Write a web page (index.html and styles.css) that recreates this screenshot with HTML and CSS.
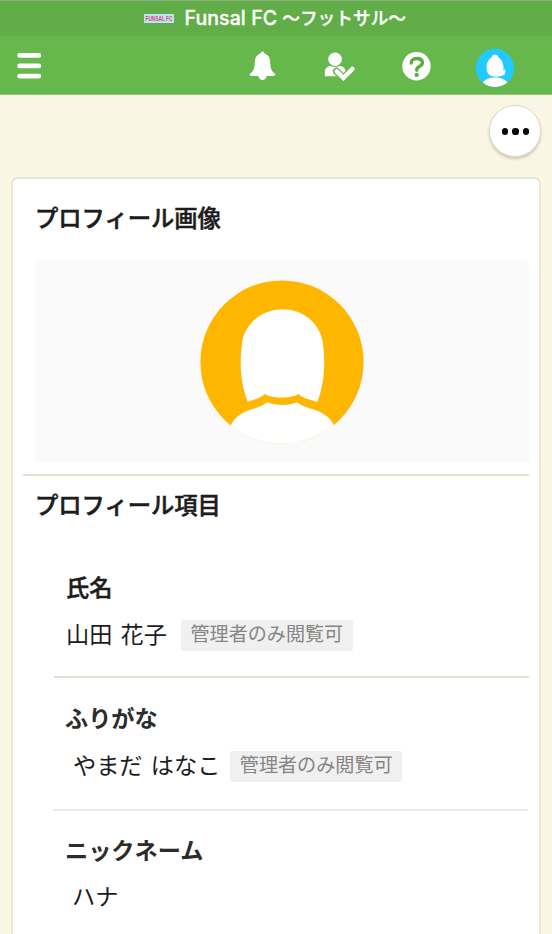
FILE: index.html
```html
<!DOCTYPE html>
<html lang="ja">
<head>
<meta charset="utf-8">
<title>Funsal FC</title>
<link rel="stylesheet" href="styles.css">
</head>
<body>
<div class="teambar">
  <span class="team-logo"><svg width="30" height="9" viewBox="0 0 30 9" overflow="visible"><rect width="30" height="9" fill="#b9e6f7"/><text x="1.5" y="6.8" textLength="27" lengthAdjust="spacingAndGlyphs" class="logo-text">FUNSAL FC</text></svg></span>
  <span class="team-name"><span class="latin">Funsal FC</span><span>〜フットサル〜</span></span>
</div>
<header class="header">
  <svg class="menu" width="26" height="28" viewBox="0 0 26 28" stroke="#fff" stroke-width="4.8" stroke-linecap="round"><path d="M3.6 3.4H22.8M3.6 13.9H22.8M3.6 24.2H22.8"/></svg>
  <nav class="actions">
    <svg width="28" height="30" viewBox="0 0 28 30" fill="#fff"><path d="M13.5 .6C14.5 .6 15.3 1.4 15.4 2.6C19.2 3.7 20.9 6.6 21.1 10.4C21.4 16.7 21.9 19.6 26.1 22.7Q26.9 24.9 24.9 25H17.7C17.3 27.5 15.5 28.9 13.5 28.9S9.7 27.5 9.3 25H2.1Q.1 24.9 .9 22.7C5.1 19.6 5.6 16.7 5.9 10.4C6.1 6.6 7.8 3.7 11.6 2.6C11.7 1.4 12.5 .6 13.5 .6Z"/></svg>
    <svg width="32" height="30" viewBox="0 0 32 30"><circle cx="11.1" cy="8.2" r="6.8" fill="#fff"/><path fill="#fff" d="M.8 25.3V21.8C.8 17.2 3.5 15.1 6.7 15.1Q11.2 17 15.7 15.1C18.7 15.1 21.4 17.2 21.5 20.6V25.3Z"/><path d="M12.5 20.3L19.4 27L28.6 18" fill="none" stroke="#66b84c" stroke-width="7.2" stroke-linecap="round" stroke-linejoin="round"/><path d="M12.7 20.3L19.4 26.8L28.4 18" fill="none" stroke="#fff" stroke-width="4.5" stroke-linecap="round"/></svg>
    <svg width="30" height="30" viewBox="0 0 30 30"><circle cx="14.5" cy="15.3" r="14.2" fill="#fff"/><path d="M9.2 12C9.2 9.1 11.2 7.5 14.7 7.5C18.4 7.5 20.4 9 20.4 11.7C20.4 13.7 19.2 14.7 17.3 15.6C15.2 16.5 14.7 17.2 14.7 19.3" fill="none" stroke="#5bad40" stroke-width="3.3" stroke-linecap="round"/><circle cx="14.7" cy="23.9" r="2.1" fill="#5bad40"/></svg>
    <svg class="me" width="40" height="40" viewBox="0 0 40 40"><defs><clipPath id="me"><circle cx="20" cy="20" r="19"/></clipPath></defs><circle cx="20" cy="20" r="19.2" fill="#22caff"/><g fill="#fff" clip-path="url(#me)"><path d="M20 6.6C21.8 6.6 22.8 7.6 23.3 9.2C26.6 11 28.1 14.5 28.6 19.2L28.2 21.8L30.8 21.5L29.7 23L31 24L29.3 24.8L30.2 26.2C27.6 27.5 25.3 28.7 20.3 28.7C14.2 28.7 11.4 24.6 11.5 19.4C11.6 14.5 13.6 11 16.7 9.2C17.2 7.6 18.2 6.6 20 6.6Z"/><path d="M7.7 35C9.4 31.2 14 29.4 20 29.4S30.8 31.2 32.6 35L28 40H12Z"/></g></svg>
  </nav>
</header>
<main class="page">
  <div class="toolbar"><button class="more" aria-label="メニュー"><i></i><i></i><i></i></button></div>
  <section class="card">
    <h2 class="heading">プロフィール画像</h2>
    <div class="photo">
      <svg width="164" height="164" viewBox="0 0 164 164"><defs><clipPath id="photo"><circle cx="82" cy="82" r="81.8"/></clipPath></defs><circle cx="82" cy="82" r="81.6" fill="#ffb600"/><g fill="#fff" clip-path="url(#photo)"><path d="M82.5 29.3C102 29.3 118.5 42 122.4 60C125.8 82 124.6 103 117.3 122C110 119.5 103 118.5 98.3 113.7C93 118.8 70 118.8 65 113.7C61 117.7 55 119.5 47.7 121.7C40 102 39.3 82 42.5 60C46.5 42 63 29.3 82.5 29.3Z"/><path d="M30.7 145.3C34 138 41 132.5 51 129.5C57 127.8 61 126.8 67.3 122.3C77 126 88 126 97.3 122.3C102 126.2 107 127.5 113 129.3C123 132.5 131 138 133.7 145.3L134 164H30Z"/></g></svg>
    </div>
    <h2 class="heading items-heading">プロフィール項目</h2>
    <dl class="items">
      <div class="item"><dt>氏名</dt><dd>山田 花子<span class="tag">管理者のみ閲覧可</span></dd></div>
      <div class="item kana"><dt>ふりがな</dt><dd>やまだ はなこ<span class="tag">管理者のみ閲覧可</span></dd></div>
      <div class="item nick"><dt>ニックネーム</dt><dd>ハナ</dd></div>
    </dl>
  </section>
</main>
</body>
</html>
```
FILE: styles.css
```css
* { box-sizing: border-box; }
html, body { margin: 0; height: 934px; overflow: hidden; }
body {
  display: flex;
  flex-direction: column;
  background: #faf6e5;
  color: #1c1c1c;
  font-family: "Noto Sans CJK JP", sans-serif;
}
.teambar {
  flex: none;
  display: flex;
  align-items: center;
  height: 36px;
  padding-left: 144px;
  gap: 10.5px;
  background: #61ae48;
  border-top: 1px solid #8fae80;
  color: #fff;
}
.team-logo { display: flex; }
.logo-text { font: bold 6.5px "Liberation Sans", sans-serif; fill: #e0486c; }
.team-name {
  display: flex;
  align-items: baseline;
  gap: 5px;
  font-size: 17.7px;
  line-height: 32px;
  height: 35px;
  font-weight: 500;
  white-space: nowrap;
  -webkit-text-stroke: .3px #fff;
}
.latin { font-family: Inter, sans-serif; font-size: 19.5px; font-weight: 500; letter-spacing: .1px; }
.header {
  flex: none;
  display: flex;
  justify-content: space-between;
  align-items: center;
  height: 59px;
  padding: 0 37px 0 16px;
  background: #66b84c;
  border-bottom: 1px solid #8ccb76;
}
.menu { margin-top: 2px; }
.actions { display: flex; align-items: center; gap: 47px; padding-top: 1px; }
.actions svg:nth-child(3) { margin-left: -1px; }
.actions .me { margin: 4px 0 0 -4px; }
.page { flex: 1; padding: 10px 11px 0 12px; }
.toolbar { display: flex; justify-content: flex-end; height: 72px; }
.more {
  display: flex;
  align-items: center;
  justify-content: center;
  gap: 4.5px;
  width: 52px;
  height: 52px;
  padding: 1px 0 0 1px;
  border: 1px solid #dfdccc;
  border-radius: 50%;
  background: #fff;
  box-shadow: 0 2px 3px rgba(100, 95, 65, .3);
}
.more i { width: 6.2px; height: 6.2px; border-radius: 50%; background: #080808; }
.card {
  height: 770px;
  margin-left: -1px;
  border: 2px solid #e9e6d6;
  border-radius: 7px;
  background: #fff;
  padding: 21px 10px 0 10px;
}
.heading {
  margin: 0 0 0 12px;
  font-size: 23.3px;
  font-weight: 500;
  line-height: 34px;
  -webkit-text-stroke: .5px #1c1c1c;
}
.photo {
  height: 202px;
  margin: 26px 0 12px 12px;
  padding: 20px 1px 0 0;
  display: flex;
  justify-content: center;
  background: #fafafa;
  border-radius: 6px 6px 0 0;
}
.items-heading {
  margin: 0;
  padding: 11px 0 0 12px;
  border-top: 2px solid #e2e2ce;
}
.items { margin: 48px 0 0 31px; }
.item { height: 107px; padding: 0 0 0 12px; }
.item + .item { border-top: 2px solid #e2e2ce; }
.item dt { font-size: 23.2px; font-weight: 500; line-height: 34px; -webkit-text-stroke: .5px #1c1c1c; }
.item dd {
  display: flex;
  align-items: center;
  margin: 12px 0 0;
  font-size: 23.2px;
  line-height: 37px;
  word-spacing: 3px;
}
.tag {
  height: 31px;
  margin: 3px 0 0 14px;
  padding: 0 9.5px;
  border-radius: 3px;
  background: #f0f0f0;
  color: #858585;
  font-size: 19.1px;
  line-height: 27px;
}
.item.kana { height: 133px; padding-top: 22px; }
.item.kana dt, .item.nick dt { color: #2c2c2c; font-weight: 700; -webkit-text-stroke: 0; }
.item.kana dt { margin-left: -1px; }
.kana dd, .nick dd { padding-left: 7px; }
.kana .tag { margin-left: 10px; }
.item.nick { margin: 0 1px 0 -1px; padding-left: 12px; padding-top: 21px; border-top: 2px solid #e9e9dd; }
.nick dd { margin-top: 11px; }
```
